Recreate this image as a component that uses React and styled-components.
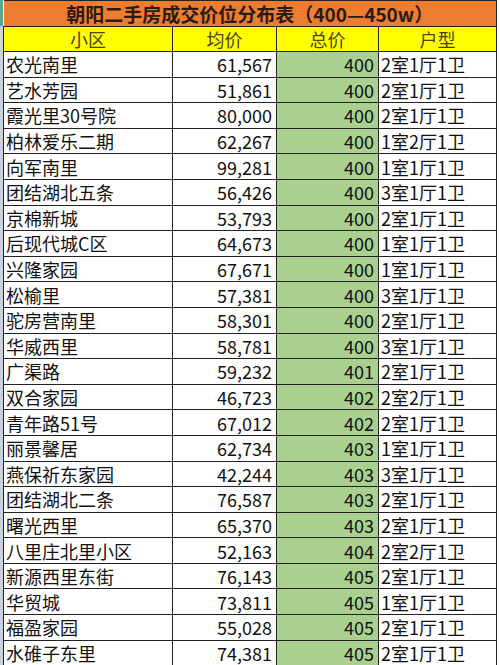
import React from 'react'
import styled, { createGlobalStyle } from 'styled-components'

const GlobalStyle = createGlobalStyle`
  html, body {
    margin: 0;
    padding: 0;
    background: #ffffff;
  }
  body {
    font-family: 'Noto Sans CJK SC', 'Noto Sans', sans-serif;
  }
`

const rows = [
  ['农光南里', '61,567', 400, '2室1厅1卫'],
  ['艺水芳园', '51,861', 400, '2室1厅1卫'],
  ['霞光里30号院', '80,000', 400, '2室1厅1卫'],
  ['柏林爱乐二期', '62,267', 400, '1室2厅1卫'],
  ['向军南里', '99,281', 400, '1室1厅1卫'],
  ['团结湖北五条', '56,426', 400, '3室1厅1卫'],
  ['京棉新城', '53,793', 400, '2室1厅1卫'],
  ['后现代城C区', '64,673', 400, '1室1厅1卫'],
  ['兴隆家园', '67,671', 400, '1室1厅1卫'],
  ['松榆里', '57,381', 400, '3室1厅1卫'],
  ['驼房营南里', '58,301', 400, '2室1厅1卫'],
  ['华威西里', '58,781', 400, '3室1厅1卫'],
  ['广渠路', '59,232', 401, '2室1厅1卫'],
  ['双合家园', '46,723', 402, '2室2厅1卫'],
  ['青年路51号', '67,012', 402, '2室1厅1卫'],
  ['丽景馨居', '62,734', 403, '1室1厅1卫'],
  ['燕保祈东家园', '42,244', 403, '3室1厅1卫'],
  ['团结湖北二条', '76,587', 403, '2室1厅1卫'],
  ['曙光西里', '65,370', 403, '2室1厅1卫'],
  ['八里庄北里小区', '52,163', 404, '2室2厅1卫'],
  ['新源西里东街', '76,143', 405, '2室1厅1卫'],
  ['华贸城', '73,811', 405, '1室1厅1卫'],
  ['福盈家园', '55,028', 405, '2室1厅1卫'],
  ['水碓子东里', '74,381', 405, '2室1厅1卫'],
]

const Sheet = styled.div`
  display: flex;
  width: 500px;
  height: 665px;
  overflow: hidden;
  background: #ffffff;
`

const Gutter = styled.div`
  width: 3px;
  flex: none;
  display: flex;
  flex-direction: column;
`

const GutterTop = styled.div`
  height: 26px;
  background: #5aa88a;
`

const GutterRest = styled.div`
  flex: 1;
  background: #c9d0de;
`

const Table = styled.table`
  border-collapse: collapse;
  table-layout: fixed;
  width: 493px;
  flex: none;
`

const Col = styled.col`
  width: ${({ w }) => w}px;
`

const TitleCell = styled.th`
  height: 25px;
  padding: 0;
  background: #ed7d31;
  border: 1px solid #222;
  border-left: none;
  color: #2e1a0c;
  font-size: 19px;
  font-weight: 700;
  line-height: 25px;
  text-align: center;
  white-space: nowrap;
`

const HeadCell = styled.th`
  height: 24px;
  padding: 0;
  background: #ffff00;
  border: 1px solid #222;
  color: #4a4300;
  font-size: 18px;
  font-weight: 400;
  line-height: 24px;
  text-align: center;
`

const Cell = styled.td`
  height: 24.6px;
  padding: 0 ${({ align }) => (align === 'right' ? '4px' : '2px')};
  background: ${({ fill }) => fill || '#ffffff'};
  border: 1px solid #222;
  color: #111;
  font-size: 18px;
  line-height: 24px;
  text-align: ${({ align }) => align || 'left'};
  white-space: nowrap;
  overflow: hidden;
`

export default function App() {
  return (
    <>
      <GlobalStyle />
      <Sheet>
        <Gutter>
          <GutterTop />
          <GutterRest />
        </Gutter>
        <Table>
          <colgroup>
            <Col w={169} />
            <Col w={104} />
            <Col w={102} />
            <Col w={118} />
          </colgroup>
          <thead>
            <tr>
              <TitleCell colSpan={4}>朝阳二手房成交价位分布表（400—450w）</TitleCell>
            </tr>
            <tr>
              <HeadCell>小区</HeadCell>
              <HeadCell>均价</HeadCell>
              <HeadCell>总价</HeadCell>
              <HeadCell>户型</HeadCell>
            </tr>
          </thead>
          <tbody>
            {rows.map(([name, avg, total, layout]) => (
              <tr key={name}>
                <Cell>{name}</Cell>
                <Cell align="right">{avg}</Cell>
                <Cell align="right" fill="#a9d08e">{total}</Cell>
                <Cell>{layout}</Cell>
              </tr>
            ))}
          </tbody>
        </Table>
      </Sheet>
    </>
  )
}
